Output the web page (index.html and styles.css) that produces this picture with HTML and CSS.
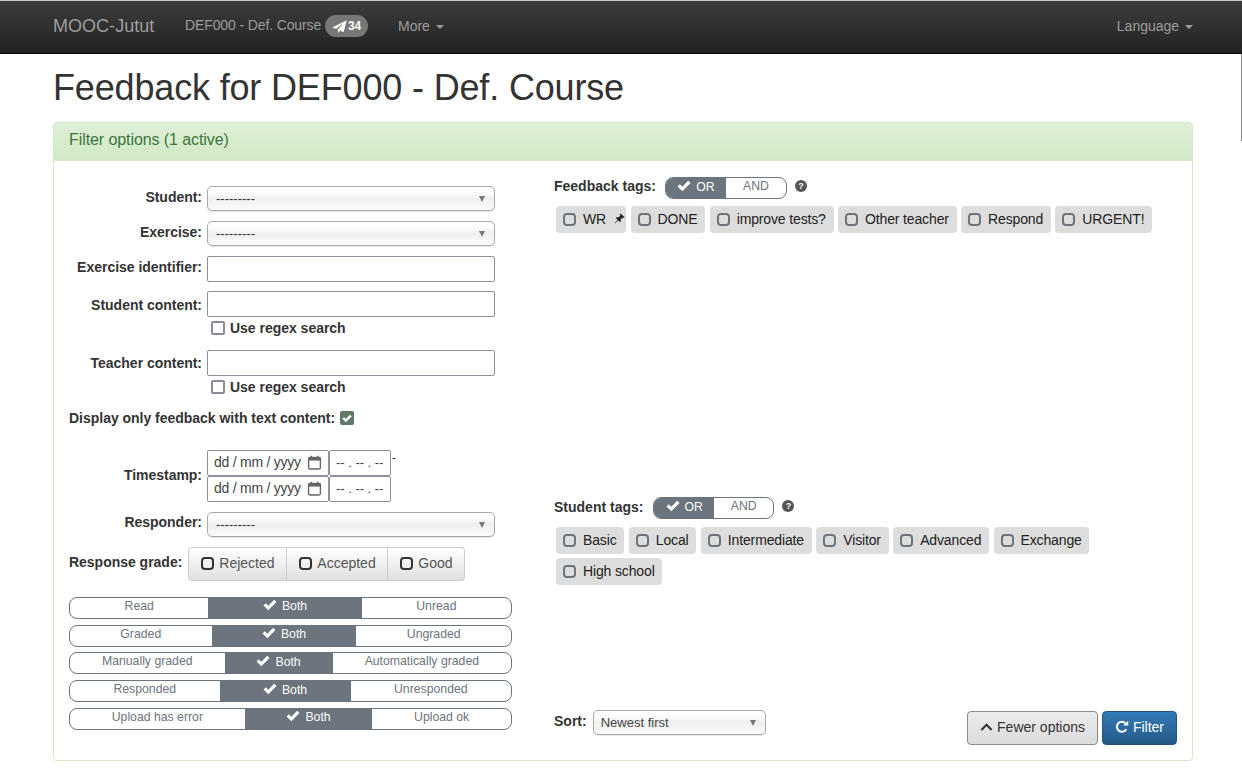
FILE: index.html
```html
<!DOCTYPE html>
<html lang="en">
<head>
    <meta charset="UTF-8">
    <meta name="viewport" content="width=device-width, initial-scale=1.0">
    <title>Feedback for DEF000 - Def. Course</title>
    <link rel="stylesheet" href="styles.css">
</head>
<body>
    <svg class="icon-defs" width="0" height="0">
        <symbol id="i-check" viewBox="0 0 14 12"><path d="M0.5 6.5 L2.8 4.2 L5.3 6.7 L11.2 0.8 L13.5 3.1 L5.3 11.3 Z" fill="currentColor"/></symbol>
        <symbol id="i-send" viewBox="0 0 14 12"><path d="M13.8 0.2 L0.2 7 L3.8 8.4 L10.8 2.6 L5.3 9.2 L5.8 12 L7.5 9.8 L10.8 11.3 Z" fill="currentColor"/></symbol>
        <symbol id="i-pin" viewBox="0 0 12 12"><path d="M7.2 0.8 L11.2 4.8 L10.2 5.3 L9 4.9 L7 7 L7.2 9 L6.2 9.6 L4.4 7.6 L1 11 L4.4 7.6 L2.4 5.8 L3 4.8 L5 5 L7.1 3 L6.7 1.8 Z" fill="currentColor" stroke="currentColor" stroke-width=".6"/></symbol>
        <symbol id="i-cal" viewBox="0 0 14 14"><rect x="1.5" y="2.2" width="11" height="3" fill="currentColor"/><path d="M1.5 3.5 Q1.5 2.2 2.8 2.2 H11.2 Q12.5 2.2 12.5 3.5 V11.7 Q12.5 13 11.2 13 H2.8 Q1.5 13 1.5 11.7 Z M4 .8 V2.6 M10 .8 V2.6" fill="none" stroke="currentColor" stroke-width="1.3"/></symbol>
        <symbol id="i-chevron" viewBox="0 0 14 10"><path d="M1.5 8.2 L7 2.5 L12.5 8.2" fill="none" stroke="currentColor" stroke-width="2.2"/></symbol>
        <symbol id="i-refresh" viewBox="0 0 14 14"><path d="M11.3 9.2 A5 5 0 1 1 10.6 3.4" fill="none" stroke="currentColor" stroke-width="2"/><path d="M8.2 5.6 H13.4 V0.6 Z" fill="currentColor"/></symbol>
    </svg>

    <nav class="navbar">
        <div class="nav-left">
            <a class="brand">MOOC-Jutut</a>
            <a class="nav-link course-link">DEF000 - Def. Course <span class="badge"><svg class="ico ico-send"><use href="#i-send"/></svg>34</span></a>
            <a class="nav-link">More <span class="caret"></span></a>
        </div>
        <a class="nav-link">Language <span class="caret"></span></a>
    </nav>

    <div class="page-edge"></div>

    <main class="container">
        <h1>Feedback for DEF000 - Def. Course</h1>

        <section class="panel">
            <div class="panel-heading">Filter options (1 active)</div>
            <form class="panel-body">
                <div class="col-left">
                    <div class="form-row row-select">
                        <label>Student:</label>
                        <div class="select-wrap wide"><select><option>---------</option></select></div>
                    </div>
                    <div class="form-row row-select">
                        <label>Exercise:</label>
                        <div class="select-wrap wide"><select><option>---------</option></select></div>
                    </div>
                    <div class="form-row row-input">
                        <label>Exercise identifier:</label>
                        <input type="text" class="text-input">
                    </div>
                    <div class="form-row row-input row-tight row-student">
                        <label>Student content:</label>
                        <input type="text" class="text-input">
                    </div>
                    <label class="regex-row"><input type="checkbox" class="check">Use regex search</label>
                    <div class="form-row row-input row-tight">
                        <label>Teacher content:</label>
                        <input type="text" class="text-input">
                    </div>
                    <label class="regex-row regex-last"><input type="checkbox" class="check">Use regex search</label>

                    <div class="text-only">
                        <label>Display only feedback with text content:</label>
                        <span class="check-on"><svg class="ico"><use href="#i-check"/></svg></span>
                    </div>

                    <div class="form-row row-stamp">
                        <label>Timestamp:</label>
                        <div class="stamp">
                            <div class="stamp-line">
                                <div class="date-field"><span>dd / mm / yyyy</span><svg class="ico ico-cal"><use href="#i-cal"/></svg></div>
                                <div class="time-field">-- . -- . --</div>
                                <span class="stamp-dash">-</span>
                            </div>
                            <div class="stamp-line">
                                <div class="date-field"><span>dd / mm / yyyy</span><svg class="ico ico-cal"><use href="#i-cal"/></svg></div>
                                <div class="time-field">-- . -- . --</div>
                            </div>
                        </div>
                    </div>

                    <div class="form-row row-select row-responder">
                        <label>Responder:</label>
                        <div class="select-wrap wide"><select><option>---------</option></select></div>
                    </div>

                    <div class="grade-row">
                        <label>Response grade:</label>
                        <div class="btn-group">
                            <button type="button" class="grade-btn grade-rejected"><i class="box"></i>Rejected</button>
                            <button type="button" class="grade-btn grade-accepted"><i class="box"></i>Accepted</button>
                            <button type="button" class="grade-btn grade-good"><i class="box"></i>Good</button>
                        </div>
                    </div>

                    <div class="switches">
                        <div class="switch"><span>Read</span><span class="on"><svg class="ico"><use href="#i-check"/></svg>Both</span><span>Unread</span></div>
                        <div class="switch"><span>Graded</span><span class="on"><svg class="ico"><use href="#i-check"/></svg>Both</span><span>Ungraded</span></div>
                        <div class="switch"><span>Manually graded</span><span class="on low"><svg class="ico"><use href="#i-check"/></svg>Both</span><span>Automatically graded</span></div>
                        <div class="switch"><span>Responded</span><span class="on low"><svg class="ico"><use href="#i-check"/></svg>Both</span><span>Unresponded</span></div>
                        <div class="switch"><span>Upload has error</span><span class="on"><svg class="ico"><use href="#i-check"/></svg>Both</span><span>Upload ok</span></div>
                    </div>
                </div>

                <div class="col-right">
                    <div class="tag-block feedback-block">
                        <div class="tag-head">
                            <b>Feedback tags:</b>
                            <div class="switch mode-switch"><span class="on"><svg class="ico"><use href="#i-check"/></svg>OR</span><span>AND</span></div>
                            <i class="help">?</i>
                        </div>
                        <div class="tags">
                            <span class="tag tag-pinned"><i class="box"></i>WR<svg class="ico ico-pin"><use href="#i-pin"/></svg></span>
                            <span class="tag"><i class="box"></i>DONE</span>
                            <span class="tag"><i class="box"></i>improve tests?</span>
                            <span class="tag"><i class="box"></i>Other teacher</span>
                            <span class="tag"><i class="box"></i>Respond</span>
                            <span class="tag"><i class="box"></i>URGENT!</span>
                        </div>
                    </div>

                    <div class="tag-block student-block">
                        <div class="tag-head">
                            <b>Student tags:</b>
                            <div class="switch mode-switch"><span class="on"><svg class="ico"><use href="#i-check"/></svg>OR</span><span>AND</span></div>
                            <i class="help">?</i>
                        </div>
                        <div class="tags">
                            <span class="tag"><i class="box"></i>Basic</span>
                            <span class="tag"><i class="box"></i>Local</span>
                            <span class="tag"><i class="box"></i>Intermediate</span>
                            <span class="tag"><i class="box"></i>Visitor</span>
                            <span class="tag"><i class="box"></i>Advanced</span>
                            <span class="tag"><i class="box"></i>Exchange</span>
                            <span class="tag"><i class="box"></i>High school</span>
                        </div>
                    </div>

                    <div class="foot-row">
                        <div class="sort">
                            <b>Sort:</b>
                            <div class="select-wrap sort-select"><select><option>Newest first</option></select></div>
                        </div>
                        <div class="actions">
                            <button type="button" class="btn btn-default"><svg class="ico ico-chevron"><use href="#i-chevron"/></svg>Fewer options</button>
                            <button type="button" class="btn btn-primary"><svg class="ico ico-refresh"><use href="#i-refresh"/></svg>Filter</button>
                        </div>
                    </div>
                </div>
            </form>
        </section>
    </main>
</body>
</html>
```

FILE: styles.css
```css
* {
    box-sizing: border-box;
}

body {
    margin: 0;
    font-family: "Liberation Sans", Arial, sans-serif;
    font-size: 14px;
    line-height: 20px;
    color: #333;
    background: #fff;
}

.icon-defs {
    display: block;
    height: 0;
}

.ico {
    display: inline-block;
    width: 14px;
    height: 12px;
    fill: currentColor;
}

/* navbar */
.navbar {
    display: flex;
    justify-content: space-between;
    align-items: center;
    height: 54px;
    padding: 0 49px 2px 53px;
    border-top: 1px solid #c8c8c8;
    border-bottom: 1px solid #080808;
    background: linear-gradient(#3c3c3c, #222);
    color: #9d9d9d;
}

.nav-left {
    display: flex;
    align-items: center;
}

.brand {
    width: 132px;
    font-size: 18px;
    letter-spacing: .03px;
}

.course-link {
    width: 213px;
    letter-spacing: -.12px;
}

.badge {
    display: inline-flex;
    align-items: center;
    height: 22px;
    padding: 0 7px;
    border-radius: 11px;
    background: #777;
    color: #fff;
    font-size: 12px;
    font-weight: bold;
    letter-spacing: 0;
    vertical-align: middle;
}

.ico-send {
    width: 15px;
    height: 13px;
    margin-right: 1px;
}

.caret {
    display: inline-block;
    margin-left: 2px;
    vertical-align: middle;
    border-top: 4px solid;
    border-left: 4px solid transparent;
    border-right: 4px solid transparent;
}

.page-edge {
    position: absolute;
    top: 54px;
    right: 0;
    width: 1px;
    height: 87px;
    background: #888;
}

/* page */
.container {
    width: 1140px;
    margin-left: 53px;
}

h1 {
    margin: 14px 0 15px;
    font-size: 36px;
    font-weight: 500;
    line-height: 39px;
    letter-spacing: -.16px;
}

.panel {
    height: 639px;
    border: 1px solid #d6e9c6;
    border-radius: 4px;
    box-shadow: 0 1px 1px rgba(0, 0, 0, .05);
}

.panel-heading {
    height: 38px;
    padding: 7px 15px;
    border-bottom: 1px solid #d6e9c6;
    border-radius: 3px 3px 0 0;
    background: linear-gradient(#dff0d8, #d0e9c6);
    color: #3c763d;
    font-size: 16px;
    line-height: 20px;
    letter-spacing: -.08px;
}

.panel-body {
    display: flex;
    padding: 15px 15px 0;
}

/* left column */
.col-left {
    width: 443px;
    margin-right: 42px;
    padding-top: 10px;
    letter-spacing: -.02px;
}

.form-row {
    display: flex;
    align-items: center;
    font-weight: bold;
}

.form-row > label {
    width: 133px;
    margin-right: 5px;
    text-align: right;
}

.row-select {
    height: 25px;
    margin-bottom: 10px;
}

.row-select > label {
    padding-bottom: 4px;
}

.row-responder > label {
    padding-bottom: 5px;
}

.row-input {
    height: 26px;
    margin-bottom: 9px;
}

.row-input > label {
    padding-bottom: 4px;
}

.row-tight {
    margin-bottom: 1px;
}

.row-tight > label {
    padding-bottom: 0;
}

.row-student > label {
    padding-top: 1px;
}

.select-wrap {
    position: relative;
    height: 25px;
}

.select-wrap::after {
    content: "";
    position: absolute;
    top: 10px;
    right: 10px;
    border-top: 6px solid #777;
    border-left: 3.5px solid transparent;
    border-right: 3.5px solid transparent;
    pointer-events: none;
}

.wide {
    width: 288px;
}

select {
    display: block;
    width: 100%;
    height: 100%;
    padding: 0 8px 1px;
    appearance: none;
    border: 1px solid #a9a9a9;
    border-radius: 5px;
    background: linear-gradient(#fff 20%, #efefef 50%, #fbfbfb 100%);
    box-shadow: 0 1px 1px rgba(0, 0, 0, .1);
    font-family: inherit;
    font-size: 13px;
    color: #333;
}

.text-input {
    width: 288px;
    height: 26px;
    border: 1px solid #8f8f9d;
    border-radius: 2px;
    background: #fff;
}

.regex-row {
    display: flex;
    align-items: center;
    height: 20px;
    margin-left: 142px;
    margin-bottom: 12px;
    font-weight: bold;
}

.regex-last {
    margin-bottom: 11px;
}

.check {
    width: 14px;
    height: 14px;
    margin: 0 5px 0 0;
    appearance: none;
    border: 2px solid #8a8a9a;
    border-radius: 2px;
    background: #fff;
}

.text-only {
    display: flex;
    align-items: center;
    height: 20px;
    margin-bottom: 22px;
    font-weight: bold;
}

.text-only label {
    margin-right: 5px;
}

.check-on {
    display: flex;
    align-items: center;
    justify-content: center;
    width: 14px;
    height: 14px;
    border-radius: 2px;
    background: #5f7a66;
    color: #fff;
}

.check-on .ico {
    width: 10px;
    height: 9px;
}

.row-stamp {
    height: 52px;
    margin-bottom: 10px;
}

.row-stamp > label {
    padding-bottom: 3px;
}

.stamp-line {
    display: flex;
    height: 26px;
}

.date-field,
.time-field {
    display: flex;
    align-items: center;
    height: 26px;
    border: 1px solid #8f8f9d;
    border-radius: 2px;
    background: #fff;
    font-weight: normal;
    color: #444;
}

.date-field {
    justify-content: space-between;
    width: 122px;
    padding: 0 6px 0 6px;
    letter-spacing: -.25px;
}

.date-field span {
    padding-bottom: 2px;
}

.ico-cal {
    width: 15px;
    height: 15px;
    margin-bottom: 2px;
    color: #666;
}

.time-field {
    width: 62px;
    padding-left: 6px;
    font-size: 13px;
}

.stamp-dash {
    margin-left: 1px;
    font-weight: normal;
    font-size: 12px;
    line-height: 16px;
}

.grade-row {
    display: flex;
    align-items: center;
    margin-bottom: 16px;
    font-weight: bold;
}

.grade-row label {
    margin-right: 6px;
    padding-bottom: 4px;
}

.btn-group {
    display: flex;
}

.grade-btn {
    display: flex;
    align-items: center;
    height: 34px;
    padding: 0 12px 2px;
    border: 1px solid #ccc;
    border-left-width: 0;
    background: linear-gradient(#fff, #e0e0e0);
    font-family: inherit;
    font-size: 14px;
    color: #555;
}

.grade-rejected {
    width: 99px;
    border-left-width: 1px;
    border-radius: 4px 0 0 4px;
}

.grade-accepted {
    width: 101px;
}

.grade-good {
    width: 77px;
    border-radius: 0 4px 4px 0;
}

.box {
    display: inline-block;
    flex: none;
    width: 13px;
    height: 13px;
    margin-right: 5px;
    border: 2.5px solid #333;
    border-radius: 4px;
}

/* toggles */
.switches {
    display: flex;
    flex-direction: column;
    gap: 5.7px;
}

.switch {
    display: flex;
    height: 22px;
    overflow: hidden;
    border: 1px solid #6c757d;
    border-radius: 8px;
    font-size: 12.25px;
    line-height: 16px;
    letter-spacing: 0;
    color: #6c757d;
}

.switch span {
    flex: 1 1 auto;
    text-align: center;
}

.switch .on {
    background: #6c757d;
    color: #fff;
}

.switch .low {
    padding-top: 1px;
}

.switch .ico {
    width: 14px;
    height: 12px;
    margin-right: 5px;
    vertical-align: -1px;
}

/* right column */
.col-right {
    flex: 1;
    padding-top: 1px;
}

.feedback-block {
    height: 320px;
}

.student-block {
    height: 213px;
}

.tag-head {
    display: flex;
    align-items: center;
    height: 22px;
}

.tag-head b {
    margin-right: 9px;
    padding-bottom: 4px;
}

.student-block .tag-head b {
    margin-right: 10px;
    padding-bottom: 2px;
}

.mode-switch {
    width: 122px;
}

.student-block .mode-switch {
    width: 121px;
}

.mode-switch span {
    flex: 1 1 50%;
    line-height: 17px;
}

.mode-switch .on {
    padding-top: 1px;
}

.help {
    display: inline-block;
    width: 12px;
    height: 12px;
    margin: 0 0 4px 8px;
    border-radius: 50%;
    background: #555;
    color: #fff;
    font-size: 9px;
    font-style: normal;
    font-weight: bold;
    line-height: 12px;
    text-align: center;
}

.tags {
    display: flex;
    flex-wrap: wrap;
    gap: 4px 4.5px;
    width: 610px;
    margin: 7px 0 0 2px;
    letter-spacing: -.14px;
}

.student-block .tags {
    margin-top: 8px;
}

.tag {
    display: inline-flex;
    align-items: center;
    height: 27px;
    padding: 0 7.75px 2px 7px;
    border-radius: 4px;
    background: #ddd;
    color: #222;
}

.tag .box {
    width: 13px;
    height: 13px;
    margin: 2px 7px 0 0;
    border-color: #6c757d;
}

.tag-pinned {
    padding-right: 1px;
}

.ico-pin {
    width: 11px;
    height: 11px;
    margin-left: 8px;
    color: #222;
}

.foot-row {
    display: flex;
    justify-content: space-between;
    width: 623px;
}

.sort {
    display: flex;
    align-items: center;
    height: 25px;
    font-size: 14px;
}

.sort b {
    margin-right: 6px;
    padding-bottom: 4px;
}

.sort-select {
    width: 173px;
}

.sort-select select {
    padding-left: 7px;
    color: #444;
}

.actions {
    display: flex;
    gap: 4px;
    margin-top: 1px;
}

.btn {
    display: flex;
    align-items: center;
    height: 34px;
    padding: 0 12px 2px;
    border: 1px solid;
    border-radius: 4px;
    font-family: inherit;
    font-size: 14px;
    white-space: nowrap;
}

.btn-default {
    width: 131px;
    border-color: #8c8c8c;
    background: linear-gradient(#ececec, #dcdcdc);
    color: #333;
}

.btn-primary {
    width: 75px;
    border-color: #245580;
    background: linear-gradient(#337ab7, #265a88);
    color: #fff;
}

.ico-chevron {
    width: 14px;
    height: 10px;
    margin-right: 4px;
}

.ico-refresh {
    width: 14px;
    height: 14px;
    margin-right: 4px;
}
```
